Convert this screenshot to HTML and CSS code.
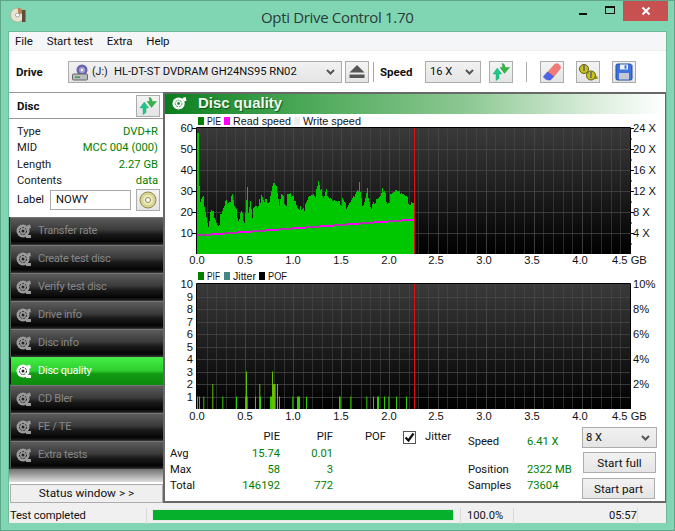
FILE: index.html
```html
<!DOCTYPE html>
<html lang="en">
<head>
<meta charset="utf-8">
<title>Opti Drive Control 1.70</title>
<link rel="stylesheet" href="styles.css">
</head>
<body>
<svg class="defs" width="0" height="0" aria-hidden="true">
  <defs>
    <symbol id="arrows" viewBox="0 0 18 18">
      <path d="M4 17.500V11H1L5.300 5L9.600 11H7V15.500Z" fill="#1cc886" stroke="#12a06c" stroke-width=".4"/>
      <path d="M10 .5C12 .5 13 2 13 4.500H17.500L12.500 10.500L8 4.500H10.500C10.500 3 10.300 1.500 10 .5Z" fill="#35b545" stroke="#23902f" stroke-width=".4"/>
    </symbol>
    <symbol id="navdisc" viewBox="0 0 16 16">
      <circle cx="7" cy="8" r="6.500" fill="currentColor"/>
      <circle cx="7" cy="8" r="3.500" fill="none" stroke="#222" stroke-width="1" stroke-dasharray="2 1"/>
      <circle cx="7" cy="8" r="1.500" fill="#222"/>
      <path d="M11 2.500L14 1.500L15 5L12.500 6Z" fill="currentColor"/>
      <path d="M10 12h5v3h-5z" fill="currentColor"/>
    </symbol>
  </defs>
</svg>
<div class="window">
  <header class="titlebar">
    <svg class="app-icon" width="17" height="16" viewBox="0 0 17 16"><circle cx="7.500" cy="8" r="7" fill="#e9e3d2" stroke="#a79f8c" stroke-width=".6"/><path d="M7.500 1A7 7 0 0 1 14 6L8.500 7.500Z" fill="#b9814f"/><circle cx="7.500" cy="8" r="2" fill="#fff" stroke="#777" stroke-width=".6"/><rect x="12" y="3" width="3.500" height="12" fill="#5d4a37"/></svg>
    <h1 class="app-title">Opti Drive Control 1.70</h1>
    <div class="win-controls">
      <span class="win-btn"><i class="glyph-min"></i></span>
      <span class="win-btn"><i class="glyph-max"></i></span>
      <span class="win-close">
        <svg width="10" height="10" viewBox="0 0 10 10"><path d="M1.500 1.500L8.500 8.500M8.500 1.500L1.500 8.500" stroke="#fff" stroke-width="2"/></svg>
      </span>
    </div>
  </header>

  <div class="client">
    <nav class="menubar"><span>File</span><span>Start test</span><span>Extra</span><span>Help</span></nav>

    <div class="toolbar">
      <b class="tool-label drive-label">Drive</b>
      <div class="combo combo-drive">
        <svg width="17" height="17" viewBox="0 0 17 17"><circle cx="10" cy="6" r="5.500" fill="#6a63a8"/><circle cx="10" cy="6" r="3" fill="#a9a4d8"/><circle cx="10" cy="6" r="1.200" fill="#eee"/><rect x=".5" y="10" width="15" height="6" rx="1" fill="#b9bcc0" stroke="#666"/><rect x="3" y="12.500" width="5" height="1.500" fill="#3f9a4d"/></svg>
        <span class="drive-letter">(J:)</span>
        <span class="combo-text">HL-DT-ST DVDRAM GH24NS95 RN02</span>
        <svg class="chev" width="9" height="6" viewBox="0 0 9 6"><path d="M1 1L4.500 4.500L8 1" fill="none" stroke="#555" stroke-width="2"/></svg>
      </div>
      <button class="tbtn eject"><svg width="16" height="14" viewBox="0 0 16 14"><path d="M8 0L15.500 7.500H.5Z" fill="#555"/><path d="M.5 9.500H15.500V13H.5Z" fill="#555"/></svg></button>
      <span class="vsep sep-a"></span>
      <b class="tool-label speed-label">Speed</b>
      <div class="combo combo-speed"><span class="combo-text">16 X</span><svg class="chev" width="9" height="6" viewBox="0 0 9 6"><path d="M1 1L4.500 4.500L8 1" fill="none" stroke="#555" stroke-width="2"/></svg></div>
      <button class="tbtn refresh"><svg width="18" height="18"><use href="#arrows"/></svg></button>
      <span class="vsep sep-b"></span>
      <button class="tbtn eraser"><svg width="20" height="18" viewBox="0 0 20 18"><path d="M12.500 1.500C14 .5 15.500 .5 17 1.500C18.500 3 19 4.500 18 6L11.500 14L5.500 9.500Z" fill="#f07a78" stroke="#e06a68" stroke-width=".6"/><path d="M5.500 9L11.500 13.500L9 16.500C7 18 2 16 1.500 13.500Z" fill="#4f63e8" stroke="#3f53d8" stroke-width=".6"/></svg></button>
      <button class="tbtn keys"><svg width="20" height="19" viewBox="0 0 20 19"><circle cx="6" cy="6" r="4.500" fill="#c9c318" stroke="#5c5a10"/><rect x="5" y="2" width="2" height="6" fill="#777"/><path d="M9 9L12 11" stroke="#8f8a14" stroke-width="2.500"/><circle cx="13" cy="12.500" r="4.500" fill="#c9c318" stroke="#5c5a10"/><rect x="12" y="9" width="2" height="6" fill="#777"/><path d="M16 15L19.500 14.500" stroke="#8f8a14" stroke-width="2.500"/></svg></button>
      <button class="tbtn floppy"><svg width="18" height="18" viewBox="0 0 18 18"><path d="M1 2.500Q1 1 2.500 1H15.500L17 2.500V15.500Q17 17 15.500 17H2.500Q1 17 1 15.500Z" fill="#3f73dd" stroke="#234a9c"/><rect x="5" y="1.500" width="8" height="5" fill="#eef2f8"/><rect x="9.500" y="2.300" width="2" height="3.400" fill="#3f73dd"/><rect x="4" y="10" width="10" height="6.500" fill="#c5c9cf"/></svg></button>
    </div>

    <div class="workspace">
      <aside class="sidebar">
        <div class="disc-head"><b>Disc</b><button class="tbtn small"><svg width="18" height="18"><use href="#arrows"/></svg></button></div>
        <dl class="disc-info">
          <div><dt>Type</dt><dd>DVD+R</dd></div>
          <div><dt>MID</dt><dd>MCC 004 (000)</dd></div>
          <div><dt>Length</dt><dd>2.27 GB</dd></div>
          <div><dt>Contents</dt><dd>data</dd></div>
        </dl>
        <div class="label-row">
          <span class="label-cap">Label</span><span class="label-input">NOWY</span>
          <button class="tbtn small"><svg width="18" height="18" viewBox="0 0 18 18"><circle cx="9" cy="9" r="8" fill="#d9d58e" stroke="#8d8a58"/><circle cx="9" cy="9" r="5" fill="#ecebc2"/><circle cx="9" cy="9" r="2.500" fill="#fff" stroke="#8d8a58"/></svg></button>
        </div>
        <ul class="nav">
          <li><svg width="16" height="16"><use href="#navdisc"/></svg>Transfer rate</li>
          <li><svg width="16" height="16"><use href="#navdisc"/></svg>Create test disc</li>
          <li><svg width="16" height="16"><use href="#navdisc"/></svg>Verify test disc</li>
          <li><svg width="16" height="16"><use href="#navdisc"/></svg>Drive info</li>
          <li><svg width="16" height="16"><use href="#navdisc"/></svg>Disc info</li>
          <li class="active"><svg width="16" height="16"><use href="#navdisc"/></svg>Disc quality</li>
          <li><svg width="16" height="16"><use href="#navdisc"/></svg>CD Bler</li>
          <li><svg width="16" height="16"><use href="#navdisc"/></svg>FE / TE</li>
          <li><svg width="16" height="16"><use href="#navdisc"/></svg>Extra tests</li>
        </ul>
        <div class="nav-fade"></div>
        <button class="status-btn">Status window &gt; &gt;</button>
      </aside>

      <main class="panel">
        <div class="panel-head">
          <svg width="15" height="15" viewBox="0 0 16 16"><circle cx="7" cy="8" r="6.500" fill="#fff"/><circle cx="7" cy="8" r="3.500" fill="none" stroke="#1a8a35" stroke-dasharray="2 1"/><circle cx="7" cy="8" r="1.500" fill="#1a8a35"/><path d="M11 2L14.500 1L15.500 5L12.500 6Z" fill="#fff"/></svg>
          <h2>Disc quality</h2>
        </div>
        <svg id="chart-pie" class="chart" width="501" height="154" viewBox="165 114 501 154"></svg>
        <svg id="chart-pif" class="chart" width="501" height="156" viewBox="165 268 501 156"></svg>

        <section class="results">
          <div class="stats">
            <span></span><span class="h">PIE</span><span class="h">PIF</span><span class="h">POF</span>
            <span class="jit"><i class="check"><svg width="11" height="11" viewBox="0 0 11 11"><path d="M1.500 5.500L4.500 8.500L9.500 1.500" fill="none" stroke="#111" stroke-width="2.200"/></svg></i>Jitter</span>
            <span class="r">Avg</span><span class="v">15.74</span><span class="v">0.01</span><span></span><span></span>
            <span class="r">Max</span><span class="v">58</span><span class="v">3</span><span></span><span></span>
            <span class="r">Total</span><span class="v">146192</span><span class="v">772</span><span></span><span></span>
          </div>
          <div class="speedinfo">
            <span>Speed</span><span class="g">6.41 X</span>
            <span></span><span></span>
            <span>Position</span><span class="g">2322 MB</span>
            <span>Samples</span><span class="g">73604</span>
          </div>
          <div class="actions">
            <div class="combo combo-test"><span class="combo-text">8 X</span><svg class="chev" width="9" height="6" viewBox="0 0 9 6"><path d="M1 1L4.500 4.500L8 1" fill="none" stroke="#555" stroke-width="2"/></svg></div>
            <button class="act">Start full</button>
            <button class="act">Start part</button>
          </div>
        </section>
      </main>
    </div>

    <footer class="statusbar">
      <span class="st-msg">Test completed</span>
      <span class="st-prog"><i></i></span>
      <span class="st-pct">100.0%</span>
      <span class="st-blank"></span>
      <span class="st-time">05:57</span>
      <span class="st-grip"></span>
    </footer>
  </div>
</div>
<script src="chart.js"></script>
</body>
</html>
```
FILE: styles.css
```css
* { box-sizing: border-box; }
html, body { margin: 0; padding: 0; }
body { width: 675px; height: 531px; overflow: hidden; background: #80d5b2; font: 11.200px/16px Roboto, "Noto Sans", sans-serif; color: #111; }
.defs { position: absolute; }
button { font: inherit; color: inherit; padding: 0; margin: 0; }
.window { width: 675px; height: 531px; border: 1px solid #5fa68a; display: flex; flex-direction: column; }
.titlebar { height: 30px; flex: none; display: flex; align-items: flex-start; position: relative; padding-left: 9px; }
.app-icon { margin-top: 6px; }
.app-title { position: absolute; left: 260px; top: 6px; margin: 0; font: 400 15px/20px "Open Sans", sans-serif; color: #2c3b3c; letter-spacing: -.33px; white-space: nowrap; }
.win-controls { margin-left: auto; display: flex; align-items: flex-start; margin-right: 6px; }
.win-btn { width: 27px; height: 20px; display: flex; align-items: center; justify-content: center; }
.glyph-min { width: 8px; height: 2px; background: #111; margin-top: 6px; }
.glyph-max { width: 10px; height: 8px; border: 1px solid #111; border-top-width: 2px; margin-top: -2px; }
.win-close { width: 45px; height: 20px; background: #c75050; display: flex; align-items: center; justify-content: center; }
.client { margin: 0 7px 7px; flex: 1; min-height: 0; background: #fff; display: flex; flex-direction: column; border: 1px solid #6fb99b; border-width: 1px 1px 0 1px; }

.menubar { height: 19px; flex: none; background: #f5f6f7; display: flex; gap: 14px; padding: 1px 0 0 6px; border-bottom: 1px solid #eceded; font-size: 11.500px; letter-spacing: -.1px; }
.toolbar { height: 41px; flex: none; display: flex; align-items: center; padding-top: 1px; }
.tool-label { font-weight: 700; font-size: 11.500px; }
.drive-label { margin-left: 7px; width: 52px; }
.combo { display: flex; align-items: center; height: 22px; border: 1px solid #acacac; background: linear-gradient(#f1f1f1, #e5e5e5); position: relative; }
.combo .chev { margin-left: auto; margin-right: 6px; }
.combo-drive { width: 274px; padding-left: 3px; }
.drive-letter { margin-left: 3px; width: 22px; font-size: 10.500px; }
.tbtn { width: 24px; height: 22px; border: 1px solid #acacac; background: linear-gradient(#f4f4f4, #e4e4e4); display: flex; align-items: center; justify-content: center; }
.eject { margin-left: 3px; }
.vsep { width: 1px; height: 20px; background: #a8a8a8; }
.sep-a { margin-left: 4px; }
.speed-label { margin-left: 6px; width: 45px; }
.combo-speed { width: 56px; padding-left: 4px; }
.refresh { margin-left: 8px; }
.sep-b { margin-left: 13px; }
.eraser { margin-left: 13px; }
.keys, .floppy { margin-left: 12px; }

.workspace { flex: 1; min-height: 0; display: flex; }
.sidebar { width: 155px; flex: none; display: flex; flex-direction: column; background: #fff; }
.disc-head { height: 27px; flex: none; display: flex; align-items: center; justify-content: space-between; padding: 0 4px 0 8px; border-top: 1px solid #999; border-bottom: 1px solid #999; font-size: 11.500px; }
.tbtn.small { width: 24px; height: 22px; flex: none; }
.disc-info { margin: 5px 0 0; padding: 0 6px 0 8px; }
.disc-info div { display: flex; justify-content: space-between; height: 16.300px; align-items: center; }
.disc-info dt { color: #222; }
.disc-info dd { margin: 0; color: #008000; }
.label-row { display: flex; align-items: center; padding: 0 5px 0 8px; height: 24px; margin-top: -1px; }
.label-cap { width: 33px; flex: none; }
.label-input { width: 81px; flex: none; height: 20px; border: 1px solid #aaa; padding: 1px 0 0 5px; margin-right: 5px; }
.nav { list-style: none; margin: 5px 0 0; padding: 0; border-left: 1px solid #222; }
.nav li { height: 28px; display: flex; align-items: center; gap: 6px; padding-left: 5px; border: 1px solid #333; border-top-color: #777; border-left-color: #555; background: linear-gradient(#5c5c5c 0%, #3a3a3a 45%, #1a1a1a 62%, #050505 90%, #1f1f1f 100%); color: #878787; font-size: 11px; letter-spacing: -.25px; }
.nav li svg { flex: none; color: #9a9a9a; }
.nav li.active { background: linear-gradient(#45ec45 0%, #2ccc2c 50%, #139a13 60%, #0c8c0c 100%); color: #fff; border-color: #0e8a0e; border-top-color: #48e048; border-left-color: #111; }
.nav li.active svg { color: #fff; }
.nav-fade { height: 13px; flex: none; background: linear-gradient(#707070, #dedede); }
.status-btn { margin: 2px 1px 0; height: 19px; border: 1px solid #adadad; background: #efefef; line-height: 15px; font-size: 11.800px; }

.panel { flex: 1; min-width: 0; border: 2px solid #686868; border-width: 2px 1px 2px 2px; margin-left: -1px; display: flex; flex-direction: column; background: #fff; }
.panel-head { height: 20px; flex: none; display: flex; align-items: center; gap: 11px; padding: 0 0 2px 7px; background: linear-gradient(90deg, #0b7d1d 0%, #45a552 25%, #8cc892 60%, #d8ecd9 85%, #fff 100%); }
.panel-head h2 { margin: 0; font: 700 15px/18px "Liberation Sans", sans-serif; color: #eef8ee; text-shadow: 1px 1px 1px #0a5a18; }
.chart { display: block; flex: none; }
.chart text { font: 11.200px "Liberation Sans", sans-serif; fill: #111; }
.results { flex: 1; display: flex; min-height: 0; }
.stats { display: grid; grid-template-columns: 34px 78px 53px 53px auto; grid-template-rows: 16px 17px 16px 16px; margin: 5px 0 0 3px; width: 300px; align-items: center; }
.stats .h { text-align: right; }
.stats .v { text-align: right; color: #008000; }
.stats .r { padding-left: 2px; }
.jit { display: flex; align-items: center; margin-left: 17px; gap: 9px; white-space: nowrap; }
.check { width: 13px; height: 13px; border: 1px solid #555; display: flex; align-items: center; justify-content: center; }
.speedinfo { display: grid; grid-template-columns: 59px 55px; grid-template-rows: 14px 13px 16px 16px; margin: 11px 0 0 0; align-items: center; }
.speedinfo .g { color: #008000; white-space: nowrap; }
.actions { display: flex; flex-direction: column; align-items: flex-start; margin: 3px 0 0 0; }
.combo-test { width: 75px; height: 21px; padding-left: 3px; }
.act { width: 73px; height: 21px; border: 1px solid #adadad; background: linear-gradient(#f2f2f2, #e5e5e5); margin: 4px 0 0 1px; font-size: 11.700px; }
.act + .act { margin: 5px 0 0; }

.statusbar { height: 20px; flex: none; background: #f0f0f0; display: flex; align-items: center; padding-top: 5px; }
.st-msg { width: 138px; padding-left: 1px; border-right: 1px solid #d8d8d8; height: 16px; letter-spacing: -.1px; }
.st-prog { width: 314px; padding-left: 5px; height: 16px; display: flex; align-items: center; border-right: 1px solid #d8d8d8; }
.st-prog i { width: 302px; height: 12px; background: #06b02c; border: 1px solid #e8e8e8; margin-top: -2px; }
.st-pct { width: 53px; padding-left: 6px; border-right: 1px solid #d8d8d8; height: 16px; }
.st-blank { width: 95px; }
.st-time { width: 29px; border-right: 1px solid #d8d8d8; height: 16px; }
.st-grip { flex: 1; }
```
FILE: chart.js
```js
(function () {
  var NS = 'http://www.w3.org/2000/svg';
  function el(svg, name, attrs, text) {
    var e = document.createElementNS(NS, name);
    for (var k in attrs) e.setAttribute(k, attrs[k]);
    if (text) e.textContent = text;
    svg.appendChild(e);
    return e;
  }
  var L = 197, R = 630, PXGB = 96.2;

  function frame(svg, id, top, bottom, hLines) {
    var defs = el(svg, 'defs', {});
    var g = el(defs, 'linearGradient', { id: id, x1: 0, y1: 0, x2: 0, y2: 1 });
    el(g, 'stop', { offset: 0, 'stop-color': '#3a3a3a' });
    el(g, 'stop', { offset: 1, 'stop-color': '#000' });
    el(svg, 'rect', { x: L, y: top, width: R - L, height: bottom - top, fill: 'url(#' + id + ')' });
    for (var i = 1; i < 45; i++) {
      var x = Math.round(L + i * PXGB / 10) + 0.5;
      el(svg, 'line', { x1: x, x2: x, y1: top, y2: bottom, stroke: '#4a4a4a', 'stroke-opacity': i % 5 ? 0.55 : 0.8 });
    }
    hLines.forEach(function (y) {
      el(svg, 'line', { x1: L, x2: R, y1: y + 0.5, y2: y + 0.5, stroke: '#4a4a4a', 'stroke-opacity': 0.75 });
    });
  }
  function border(svg, top, bottom) {
    el(svg, 'path', { d: 'M' + (L - .5) + ' ' + bottom + 'V' + (top - .5) + 'H' + (R + .5) + 'V' + bottom, fill: 'none', stroke: '#000' });
    el(svg, 'line', { x1: 414.5, x2: 414.5, y1: top, y2: bottom, stroke: '#e01010' });
  }
  function xLabels(svg, y) {
    for (var i = 0; i < 9; i++) {
      el(svg, 'text', { x: 197 + i * 48 - (i > 4 ? 1 : 0), y: y, 'text-anchor': 'middle' }, (i / 2).toFixed(1));
    }
    el(svg, 'text', { x: 612, y: y }, '4.5 GB');
  }
  function legend(svg, y, items) {
    items.forEach(function (it) {
      el(svg, 'rect', { x: it[0], y: y - 4, width: 6, height: 8, fill: it[1] });
      el(svg, 'text', { x: it[0] + 9, y: y + 4, textLength: it[3], lengthAdjust: 'spacingAndGlyphs' }, it[2]);
    });
  }

  /* PIE chart */
  var pie = document.getElementById('chart-pie');
  var ys = [233, 212, 191, 170, 149];
  frame(pie, 'gradPie', 128, 254, ys);
  legend(pie, 121, [[198, '#008000', 'PIE', 14], [224, '#ff00ff', 'Read speed', 58], [294, '#eeeeee', 'Write speed', 58]]);

  var env = [[2,68],[3,57],[4,55],[6,58],[7,47],[9,43],[10,37],[11,33],[13,42],[15,45],[17,40],[19,35],[20,33],[23,38],[25,40],[27,45],[29,55],[30,48],[32,50],[35,57],[37,45],[39,43],[41,37],[44,43],[47,38],[50,67],[51,48],[53,60],[55,43],[59,47],[64,57],[67,50],[72,53],[76,71],[79,68],[82,47],[84,60],[89,55],[97,60],[100,50],[104,45],[107,48],[110,55],[117,58],[121,73],[124,65],[127,57],[129,65],[135,55],[142,57],[149,45],[154,55],[162,72],[165,48],[170,66],[174,47],[182,57],[185,66],[190,56],[202,63],[209,57],[217,52]];
  var peaks = {};
  env.forEach(function (p) { peaks[p[0]] = p[1]; });
  function envAt(i) {
    if (i <= env[0][0]) return env[0][1];
    for (var k = 1; k < env.length; k++) {
      if (i <= env[k][0]) {
        var a = env[k - 1], b = env[k];
        return a[1] + (b[1] - a[1]) * (i - a[0]) / Math.max(1, b[0] - a[0]);
      }
    }
    return 50;
  }
  var seed = 4711;
  function rnd() { seed = (seed * 1103515245 + 12345) & 0x7fffffff; return (seed >> 8) / 0x7fffff; }
  var d = '', run = 0, off = 0;
  for (var i = 0; i < 218; i++) {
    if (run-- <= 0) { run = Math.floor(rnd() * 4); off = Math.round(rnd() * 11) - 7; }
    var h = i < 2 ? 121 : (peaks[i] && peaks[i] > 60 ? peaks[i] : Math.round(envAt(i) + off));
    d += 'M' + (L + i) + ' 254v-' + h + 'h1v' + h + 'z';
  }
  el(pie, 'path', { d: d, fill: '#00c800' });
  /* read speed: a stepped line rising one pixel per segment */
  var thin = '', thick = '';
  for (var s = 0; s < 16; s++) {
    var x0 = L + s * 13.6, yl = 235 - s;
    if (s % 2) thick += 'M' + x0.toFixed(1) + ' ' + yl + 'h13.6';
    else thin += 'M' + x0.toFixed(1) + ' ' + yl + 'h13.6';
  }
  el(pie, 'path', { d: thin, stroke: '#f000e8', 'stroke-width': 1.4, fill: 'none' });
  el(pie, 'path', { d: thick, stroke: '#ff00ff', 'stroke-width': 2, fill: 'none' });
  border(pie, 128, 254);
  [60, 50, 40, 30, 20, 10].forEach(function (v, k) {
    var y = 128 + k * 21;
    el(pie, 'text', { x: 193, y: y + 4, 'text-anchor': 'end' }, String(v));
    el(pie, 'line', { x1: 192, x2: 197, y1: y + .5, y2: y + .5, stroke: '#000' });
  });
  ['24 X', '20 X', '16 X', '12 X', '8 X', '4 X'].forEach(function (v, k) {
    el(pie, 'text', { x: 633, y: 128 + k * 21 + 4 }, v);
  });
  for (var t = 0; t < 12; t++) {
    el(pie, 'line', { x1: 630, x2: t % 2 ? 632 : 634, y1: 128.5 + t * 10.5, y2: 128.5 + t * 10.5, stroke: '#000' });
  }
  xLabels(pie, 264);

  /* PIF chart */
  var pif = document.getElementById('chart-pif');
  var gy = [];
  for (var u = 1; u < 10; u++) gy.push(Math.round(409 - u * 12.5));
  frame(pif, 'gradPif', 284, 409, gy);
  legend(pif, 276, [[198, '#008000', 'PIF', 13], [224, '#458585', 'Jitter', 23], [259, '#000000', 'POF', 19]]);
  var bars = [[96,3,1],[102,2,1],[115,2,1],[142,2,2],[172,2,1],[213,2,1],[240,8,1],[243,2,3],[270,2,1],[283,2,2],[283,5,1],[315,7,1],[321,3,3],[322,10,2],[336,3,2],[342,2,1],[382,2,1],[396,9,1],[423,2,1],[522,5,1],[556,2,1],[604,2,1],[624,3,1],[636,6,1],[657,2,1],[670,2,1],[693,2,1],[723,2,1]];
  bars.forEach(function (b) {
    var x = 165 + b[0] / 3, w = Math.max(1, b[1] / 3), h = b[2] * 12.5;
    el(pif, 'rect', { x: x.toFixed(1), y: 409 - h, width: w.toFixed(1), height: h, fill: b[2] > 1 ? '#66c000' : '#33cc00' });
  });
  border(pif, 284, 409);
  for (var n = 10; n > 0; n--) {
    var yy = 409 - n * 12.5;
    el(pif, 'text', { x: 193, y: yy + 4, 'text-anchor': 'end' }, String(n));
    if (n % 2 === 0) el(pif, 'text', { x: 633, y: yy + 4 }, n + '%');
  }
  xLabels(pif, 420);
})();
```
